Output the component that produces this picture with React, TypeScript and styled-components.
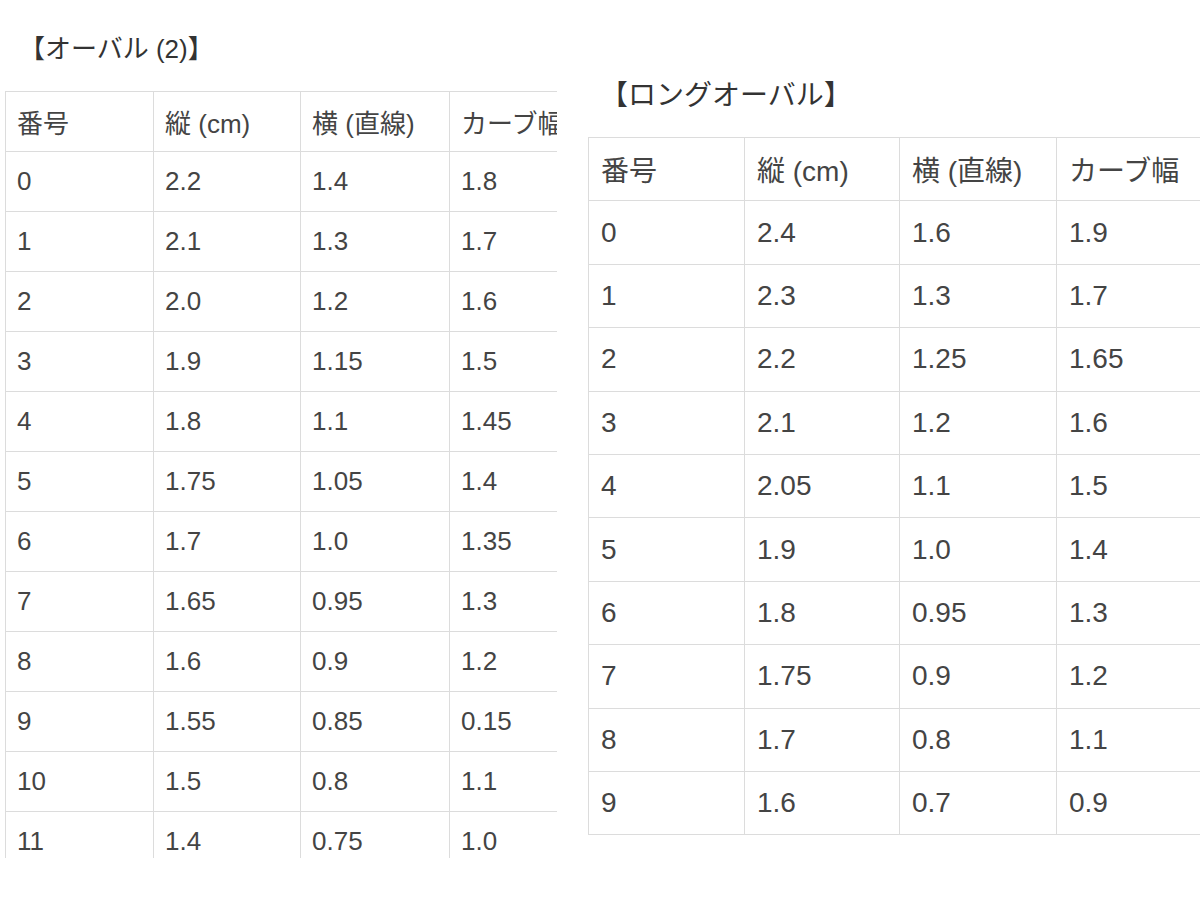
import React from 'react';
import styled, { createGlobalStyle } from 'styled-components';

const GlobalStyle = createGlobalStyle`
  html, body {
    margin: 0;
    padding: 0;
    background: #fff;
    overflow: hidden;
  }
  body {
    font-family: "Liberation Sans", "Noto Sans CJK JP", sans-serif;
    color: #444;
  }
`;

const Page = styled.div`
  display: flex;
  align-items: flex-start;
  padding-left: 5px;
  width: 1200px;
  height: 901px;
  box-sizing: border-box;
  overflow: hidden;
`;

const Panel = styled.section<{ $width: number; $height?: number; $gap: number }>`
  flex: none;
  width: ${({ $width }) => $width}px;
  height: ${({ $height }) => ($height ? `${$height}px` : 'auto')};
  margin-left: ${({ $gap }) => $gap}px;
  overflow: hidden;
`;

const Title = styled.h2<{ $size: number; $top: number; $height: number; $indent: number }>`
  margin: 0;
  padding-top: ${({ $top }) => $top}px;
  padding-left: ${({ $indent }) => $indent}px;
  height: ${({ $height }) => $height}px;
  box-sizing: border-box;
  font-size: ${({ $size }) => $size}px;
  font-weight: normal;
  line-height: 1.2;
  color: #333;
  white-space: nowrap;
`;

const Table = styled.table<{ $size: number; $width: number }>`
  border-collapse: collapse;
  table-layout: fixed;
  width: ${({ $width }) => $width}px;
  font-size: ${({ $size }) => $size}px;
  color: #444;
`;

const Cell = styled.td<{ $h: number; $w: number; $pad: number }>`
  width: ${({ $w }) => $w}px;
  height: ${({ $h }) => $h}px;
  padding: 0 0 0 ${({ $pad }) => $pad}px;
  box-sizing: border-box;
  border: 1px solid #dcdcdc;
  vertical-align: middle;
  white-space: nowrap;
  overflow: hidden;
`;

const HEAD = ['番号', '縦 (cm)', '横 (直線)', 'カーブ幅'];

const oval2 = [
  ['0', '2.2', '1.4', '1.8'],
  ['1', '2.1', '1.3', '1.7'],
  ['2', '2.0', '1.2', '1.6'],
  ['3', '1.9', '1.15', '1.5'],
  ['4', '1.8', '1.1', '1.45'],
  ['5', '1.75', '1.05', '1.4'],
  ['6', '1.7', '1.0', '1.35'],
  ['7', '1.65', '0.95', '1.3'],
  ['8', '1.6', '0.9', '1.2'],
  ['9', '1.55', '0.85', '0.15'],
  ['10', '1.5', '0.8', '1.1'],
  ['11', '1.4', '0.75', '1.0'],
];

const longOval = [
  ['0', '2.4', '1.6', '1.9'],
  ['1', '2.3', '1.3', '1.7'],
  ['2', '2.2', '1.25', '1.65'],
  ['3', '2.1', '1.2', '1.6'],
  ['4', '2.05', '1.1', '1.5'],
  ['5', '1.9', '1.0', '1.4'],
  ['6', '1.8', '0.95', '1.3'],
  ['7', '1.75', '0.9', '1.2'],
  ['8', '1.7', '0.8', '1.1'],
  ['9', '1.6', '0.7', '0.9'],
];

interface SizeTableProps {
  rows: string[][];
  cols: number[];
  rowH: number;
  size: number;
  pad: number;
}

const SizeTable: React.FC<SizeTableProps> = ({ rows, cols, rowH, size, pad }) => (
  <Table $size={size} $width={cols.reduce((a, b) => a + b, 0)}>
    <tbody>
      {[HEAD, ...rows].map((r, i) => (
        <tr key={i}>
          {r.map((v, j) => (
            <Cell key={j} $h={rowH} $w={cols[j]} $pad={pad}>
              {v}
            </Cell>
          ))}
        </tr>
      ))}
    </tbody>
  </Table>
);

const App: React.FC = () => (
  <>
    <GlobalStyle />
    <Page>
      <Panel $width={552} $height={858} $gap={0}>
        <Title $size={26} $top={34} $height={91} $indent={14}>【オーバル (2)】</Title>
        <SizeTable rows={oval2} cols={[148, 147, 149, 150]} rowH={60} size={26} pad={11} />
      </Panel>
      <Panel $width={612} $gap={31}>
        <Title $size={28} $top={79} $height={137} $indent={12}>【ロングオーバル】</Title>
        <SizeTable rows={longOval} cols={[156, 155, 157, 170]} rowH={63.4} size={28} pad={12} />
      </Panel>
    </Page>
  </>
);

export default App;
